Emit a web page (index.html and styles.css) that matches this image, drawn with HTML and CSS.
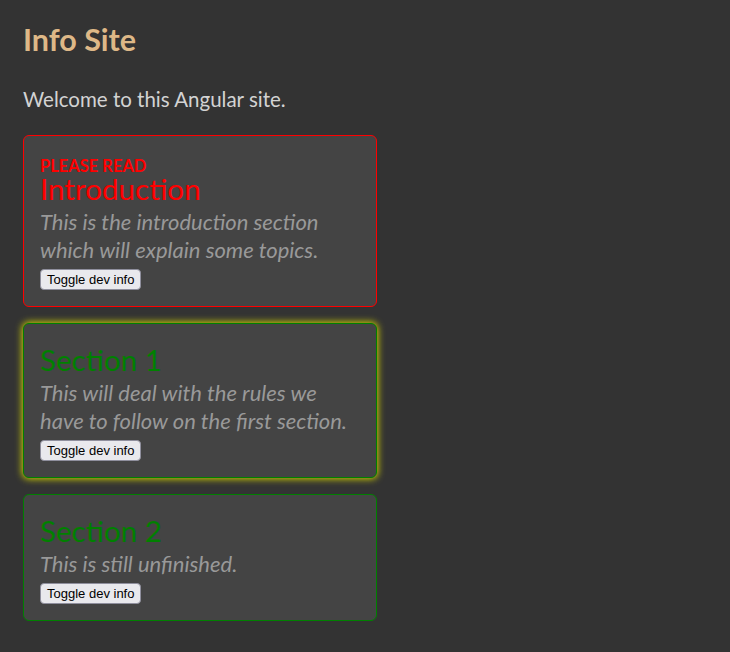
FILE: index.html
```html
<!DOCTYPE html>
<html>
<head>
<meta charset="utf-8">
<link rel="stylesheet" href="styles.css">
</head>
<body>
<main class="page">
  <h1 class="site-title">Info Site</h1>
  <p class="welcome">Welcome to this Angular site.</p>
  <div class="sections">
    <section class="card card-important">
      <div class="eyebrow">PLEASE READ</div>
      <h2 class="card-title">Introduction</h2>
      <p class="card-desc">This is the introduction section which will explain some topics.</p>
      <button class="dev-btn">Toggle dev info</button>
    </section>
    <section class="card card-ok card-active">
      <h2 class="card-title">Section 1</h2>
      <p class="card-desc">This will deal with the rules we have to follow on the first section.</p>
      <button class="dev-btn">Toggle dev info</button>
    </section>
    <section class="card card-ok">
      <h2 class="card-title">Section 2</h2>
      <p class="card-desc">This is still unfinished.</p>
      <button class="dev-btn">Toggle dev info</button>
    </section>
  </div>
</main>
</body>
</html>
```
FILE: styles.css
```css
html, body {
  margin: 0;
  padding: 0;
  background: #333333;
}
body {
  font-family: Lato, "Open Sans", sans-serif;
  color: #d3d3d3;
}
.page {
  padding: 21px 23px;
}
.site-title {
  margin: 0;
  font-size: 30.5px;
  font-weight: 700;
  color: #deb887;
  line-height: 36px;
}
.welcome {
  margin: 30px 0 0;
  font-size: 20.5px;
  line-height: 24px;
  color: #d3d3d3;
}
.sections {
  display: flex;
  flex-direction: column;
  gap: 16px;
  margin-top: 24px;
}
.card {
  width: 320px;
  padding: 16px;
  background: #444444;
  border: 1px solid #008000;
  border-radius: 6px;
}
.card-important {
  border-color: #ff0000;
}
.card-active {
  box-shadow: 0 0 7px 1px #d4d400;
}
.eyebrow {
  margin-top: 6px;
  font-size: 16.5px;
  font-weight: 700;
  line-height: 16px;
  color: #ff0000;
}
.card-title {
  margin: 2px 0 0;
  font-size: 29.6px;
  font-weight: 400;
  line-height: 26px;
  color: #008000;
}
.card-ok .card-title {
  margin-top: 7px;
}
.card-important .card-title {
  color: #ff0000;
}
.card-desc {
  margin: 6px 0 0;
  font-size: 22px;
  font-style: italic;
  line-height: 28px;
  color: #999999;
}
.dev-btn {
  display: block;
  margin-top: 5px;
  font-family: "Liberation Sans", Arial, sans-serif;
  font-size: 13px;
  line-height: 15px;
  padding: 2px 6px;
  background: #e9e9ed;
  color: #000;
  border: 1px solid #8f8f9d;
  border-radius: 4px;
}
```
